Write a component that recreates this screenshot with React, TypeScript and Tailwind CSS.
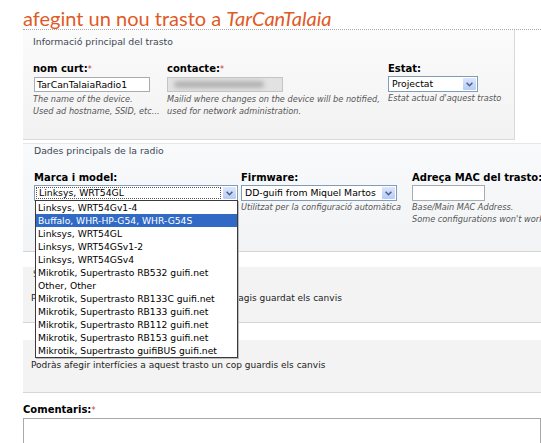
import React from 'react';

const models = [
  'Linksys, WRT54Gv1-4',
  'Buffalo, WHR-HP-G54, WHR-G54S',
  'Linksys, WRT54GL',
  'Linksys, WRT54GSv1-2',
  'Linksys, WRT54GSv4',
  'Mikrotik, Supertrasto RB532 guifi.net',
  'Other, Other',
  'Mikrotik, Supertrasto RB133C guifi.net',
  'Mikrotik, Supertrasto RB133 guifi.net',
  'Mikrotik, Supertrasto RB112 guifi.net',
  'Mikrotik, Supertrasto RB153 guifi.net',
  'Mikrotik, Supertrasto guifiBUS guifi.net',
];

function Arrow() {
  return (
    <span className="flex h-[14px] w-[15px] shrink-0 items-center justify-center rounded-[2px] border border-white bg-linear-to-b from-[#dce6fd] to-[#b7cbf6]">
      <svg width="7" height="5" viewBox="0 0 7 5">
        <path d="M0.6 0.8 L3.5 3.7 L6.4 0.8" stroke="#4d6185" strokeWidth="1.6" fill="none" />
      </svg>
    </span>
  );
}

function Label({ children, required }: { children: React.ReactNode; required?: boolean }) {
  return (
    <div className="h-[12px] whitespace-nowrap text-[10px] font-bold leading-[12px] text-black">
      {children}
      {required && <span className="text-[8px] font-normal text-[#cc3333]">*</span>}
    </div>
  );
}

function Desc({ children }: { children: React.ReactNode }) {
  return <div className="whitespace-nowrap text-[8.2px] italic leading-[12px] text-[#555]">{children}</div>;
}

function Select({ value, width, focused }: { value: string; width: string; focused?: boolean }) {
  return (
    <div className={`flex h-[16px] items-center border border-[#7f9db9] bg-white ${width}`}>
      <div
        className={`mx-[1px] flex h-[12px] flex-1 items-center overflow-hidden whitespace-nowrap pl-[2px] text-[9.3px] text-black ${
          focused ? 'border border-dotted border-[#555]' : ''
        }`}
      >
        {value}
      </div>
      <Arrow />
    </div>
  );
}

export default function App() {
  return (
    <div className="relative h-[443px] w-[541px] overflow-hidden bg-white font-['DejaVu_Sans',sans-serif] text-[#333]">
      <h1 className="h-[29px] whitespace-nowrap pl-[23px] pt-[6px] font-['Lato',sans-serif] text-[20px] leading-[24px] font-normal text-[#e05a26]">
        afegint un nou trasto a <i>TarCanTalaia</i>
      </h1>
      <div className="ml-[23px] border-b border-dotted border-[#a8a8a8]" />

      {/* Informació principal */}
      <div className="ml-[23px] h-[110px] w-[492px] border-r border-b border-[#d9d9d9] bg-linear-to-b from-[#fbfbfb] to-[#f2f2f2] pl-[10px] pt-[6px]">
        <div className="h-[12px] text-[9.3px] leading-[12px] text-[#3e4856]">Informació principal del trasto</div>
        <div className="mt-[15px] flex">
          <div className="w-[134px] shrink-0">
            <Label required>nom curt:</Label>
            <div className="ml-[1px] mt-[2px] flex h-[15px] w-[116px] items-center border border-[#a5acb2] bg-white pl-[2px] text-[9.3px] text-black">
              TarCanTalaiaRadio1
            </div>
            <div className="mt-[1px]">
              <Desc>The name of the device.</Desc>
              <Desc>Used ad hostname, SSID, etc...</Desc>
            </div>
          </div>
          <div className="w-[221px] shrink-0">
            <Label required>contacte:</Label>
            <div className="mt-[2px] flex h-[15px] w-[116px] items-center overflow-hidden border border-[#c4c4c4] bg-[#e2e2e2] px-[6px]">
              <div className="h-[7px] w-[90px] rounded-full bg-[#b4b4b4] blur-[2px]" />
            </div>
            <div className="mt-[1px]">
              <Desc>Mailid where changes on the device will be notified,</Desc>
              <Desc>used for network administration.</Desc>
            </div>
          </div>
          <div className="shrink-0">
            <Label>Estat:</Label>
            <div className="mt-[1px]">
              <Select value="Projectat" width="w-[90px]" />
            </div>
            <Desc>Estat actual d'aquest trasto</Desc>
          </div>
        </div>
      </div>

      {/* Dades principals de la radio */}
      <div className="ml-[23px] mt-[3px] h-[109px] border-t border-b border-t-[#e6e6e6] border-b-[#d6d6d6] bg-linear-to-b from-[#f9fafb] to-[#f1f3f5] pl-[11px] pt-[1px]">
        <div className="h-[12px] text-[9.3px] leading-[12px] text-[#3e4856]">Dades principals de la radio</div>
        <div className="mt-[15px] flex">
          <div className="w-[207px] shrink-0">
            <Label>Marca i model:</Label>
            <div className="mt-[1px]">
              <Select value="Linksys, WRT54GL" width="w-[204px]" focused />
            </div>
          </div>
          <div className="w-[171px] shrink-0">
            <Label>Firmware:</Label>
            <div className="mt-[1px]">
              <Select value="DD-guifi from Miquel Martos" width="w-[156px]" />
            </div>
            <Desc>Utilitzat per la configuració automàtica</Desc>
          </div>
          <div className="shrink-0">
            <Label>Adreça MAC del trasto:</Label>
            <div className="mt-[1px] h-[16px] w-[73px] border border-[#a5acb2] bg-white" />
            <Desc>Base/Main MAC Address.</Desc>
            <Desc>Some configurations won't work without it.</Desc>
          </div>
        </div>
      </div>

      {/* Serveis */}
      <div className="ml-[23px] mt-[15px] h-[56px] border-b border-[#d6d6d6] bg-[#f3f3f3] pl-[10px] pt-[1px]">
        <div className="h-[12px] text-[9.3px] leading-[12px] text-[#3e4856]">Serveis</div>
        <div className="-ml-[2px] mt-[12px] h-[12px] whitespace-nowrap text-[9px] leading-[12px] text-[#222]">
          Podràs afegir serveis a aquest trasto un cop hagis guardat els canvis
        </div>
      </div>

      {/* Interfícies */}
      <div className="ml-[23px] mt-[17px] h-[53px] border-b border-[#d6d6d6] bg-[#f3f3f3] pl-[12px] pt-[1px]">
        <div className="h-[12px] text-[9.3px] leading-[12px] text-[#3e4856]">Interfícies</div>
        <div className="-ml-[4px] mt-[6px] h-[12px] whitespace-nowrap text-[9px] leading-[12px] text-[#222]">
          Podràs afegir interfícies a aquest trasto un cop guardis els canvis
        </div>
      </div>

      <div className="ml-[23px] mt-[11px]">
        <Label required>Comentaris:</Label>
        <div className="mt-[2px] h-[40px] border border-[#a9a9a9] bg-white" />
      </div>

      {/* open dropdown list */}
      <div className="absolute left-[35px] top-[200px] w-[203px] border border-[#3a3a3a] bg-white shadow-[1px_1px_0_#bbb]">
        {models.map((m, i) => (
          <div
            key={m}
            className={`h-[13px] whitespace-nowrap pl-[2px] text-[9.2px] leading-[13px] ${
              i === 1 ? 'bg-[#316ac5] text-white' : 'text-black'
            }`}
          >
            {m}
          </div>
        ))}
      </div>
    </div>
  );
}
